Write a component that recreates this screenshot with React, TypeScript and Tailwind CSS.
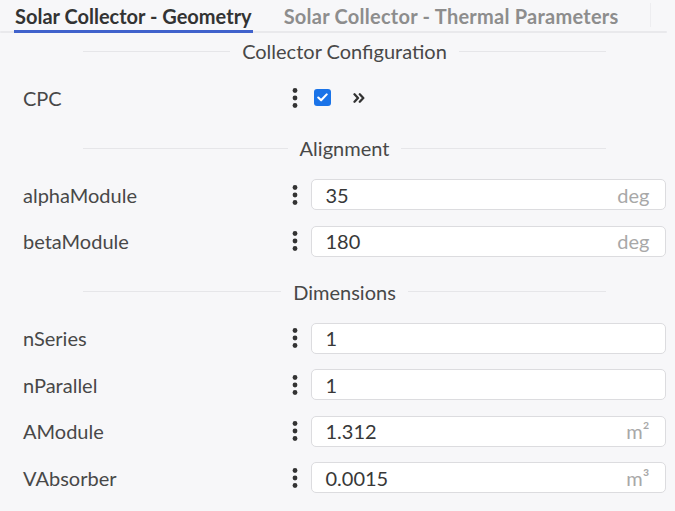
const font = { fontFamily: "Lato, 'Noto Sans', sans-serif" };

type Field = { label: string; value: string; unit?: string };

const alignment: Field[] = [
  { label: "alphaModule", value: "35", unit: "deg" },
  { label: "betaModule", value: "180", unit: "deg" },
];

const dimensions: Field[] = [
  { label: "nSeries", value: "1" },
  { label: "nParallel", value: "1" },
  { label: "AModule", value: "1.312", unit: "m²" },
  { label: "VAbsorber", value: "0.0015", unit: "m³" },
];

function Dots() {
  return (
    <div className="w-[20px] flex justify-center">
      <svg width="6" height="22" viewBox="0 0 6 22" className="text-[#333]">
        <circle cx="3" cy="3.5" r="2.4" fill="currentColor" />
        <circle cx="3" cy="11" r="2.4" fill="currentColor" />
        <circle cx="3" cy="18.5" r="2.4" fill="currentColor" />
      </svg>
    </div>
  );
}

function SectionTitle({ title, first }: { title: string; first?: boolean }) {
  return (
    <div
      className={`ml-[83px] w-[523px] h-6 flex items-center gap-3 ${
        first ? "mt-[6px]" : "mt-[23px]"
      } mb-[19px]`}
    >
      <div className="flex-1 h-px bg-[#e6e6e9]" />
      <span className="text-[20px] leading-6 text-[#484848]">{title}</span>
      <div className="flex-1 h-px bg-[#e6e6e9]" />
    </div>
  );
}

function Row({ label, children }: { label: string; children: React.ReactNode }) {
  return (
    <div className="flex items-center h-[31px] pl-[23px]">
      <div className="w-[262px] text-[20px] leading-6 text-[#484848]">{label}</div>
      <Dots />
      {children}
    </div>
  );
}

function InputRow({ label, value, unit }: Field) {
  return (
    <Row label={label}>
      <div className="ml-[5.5px] w-[355px] h-[31px] bg-white border border-[#dcdcdf] rounded-[5px] flex items-center justify-between pl-[14px] pr-[15px]">
        <span className="text-[20px] leading-6 text-[#383838]">{value}</span>
        {unit && <span className="text-[20px] leading-6 text-[#a8a8a8]">{unit}</span>}
      </div>
    </Row>
  );
}

export default function App() {
  return (
    <div className="w-[675px] h-[511px] bg-[#f7f7f9] overflow-hidden" style={font}>
      <div className="relative w-[667px] h-[33px] flex items-end pl-[15px] gap-8">
        <div className="absolute left-0 right-0 bottom-0 h-[2px] rounded-full bg-[#e9e9ec]" />
        <div className="absolute left-[650px] top-[3px] h-[24px] w-px bg-[#ededf0]" />
        <div className="relative h-[33px] flex flex-col">
          <span className="text-[20px] leading-6 font-bold text-[#333] mt-[4px]">
            Solar Collector - Geometry
          </span>
          <div className="absolute left-[-1px] right-[-1px] bottom-0 h-[3px] bg-[#4062cc]" />
        </div>
        <div className="h-[33px] flex flex-col">
          <span className="text-[20px] leading-6 font-bold tracking-[0.25px] text-[#8d8d8d] mt-[4px]">
            Solar Collector - Thermal Parameters
          </span>
        </div>
      </div>

      <SectionTitle title="Collector Configuration" first />
      <Row label="CPC">
        <div className="ml-[9px] w-[17px] h-[17px] rounded-[3px] bg-[#1a73e8] flex items-center justify-center">
          <svg width="11" height="9" viewBox="0 0 11 9" fill="none">
            <path d="M1.3 4.6 L4.1 7.3 L9.7 1.4" stroke="white" strokeWidth="2.1" strokeLinecap="round" strokeLinejoin="round" />
          </svg>
        </div>
        <div className="ml-[22px] flex items-center">
          <svg width="12" height="10" viewBox="0 0 12 10" fill="none">
            <path d="M1.5 1.3 L5 5 L1.5 8.7 M6.8 1.3 L10.3 5 L6.8 8.7" stroke="#333" strokeWidth="2.3" strokeLinecap="round" strokeLinejoin="round" />
          </svg>
        </div>
      </Row>

      <SectionTitle title="Alignment" />
      <div className="flex flex-col gap-[15.5px]">
        {alignment.map((f) => (
          <InputRow key={f.label} {...f} />
        ))}
      </div>

      <SectionTitle title="Dimensions" />
      <div className="flex flex-col gap-[15.5px]">
        {dimensions.map((f) => (
          <InputRow key={f.label} {...f} />
        ))}
      </div>
    </div>
  );
}
